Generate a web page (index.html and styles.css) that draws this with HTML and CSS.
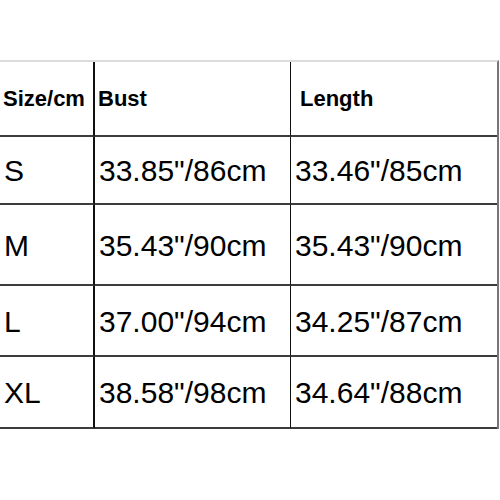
FILE: index.html
```html
<!DOCTYPE html>
<html>
<head>
<meta charset="utf-8">
<link rel="stylesheet" href="styles.css">
</head>
<body>
<div class="sheet">
  <div class="cell c1 head">Size/cm</div>
  <div class="cell c2 head">Bust</div>
  <div class="cell c3 head h3">Length</div>

  <div class="cell c1">S</div>
  <div class="cell c2">33.85"/86cm</div>
  <div class="cell c3">33.46"/85cm</div>

  <div class="cell c1">M</div>
  <div class="cell c2">35.43"/90cm</div>
  <div class="cell c3">35.43"/90cm</div>

  <div class="cell c1">L</div>
  <div class="cell c2">37.00"/94cm</div>
  <div class="cell c3">34.25"/87cm</div>

  <div class="cell c1">XL</div>
  <div class="cell c2">38.58"/98cm</div>
  <div class="cell c3">34.64"/88cm</div>
</div>
</body>
</html>
```

FILE: styles.css
```css
html, body {
  margin: 0;
  padding: 0;
  background: #fff;
}

body {
  font-family: "Liberation Sans", Arial, sans-serif;
  color: #000;
}

.sheet {
  margin-top: 60px;
  width: 499px;
  box-sizing: border-box;
  border-top: 2px solid #dcdcdc;
  border-right: 2px solid #777;
  display: grid;
  grid-template-columns: 95px 196px 206px;
  grid-template-rows: 75px 68px 81px 71px 72px;
}

.cell {
  box-sizing: border-box;
  display: flex;
  align-items: center;
  border-bottom: 2px solid #3c3c3c;
  font-size: 30px;
  line-height: 1;
  white-space: nowrap;
  padding-top: 2px;
}

.c1 {
  border-right: 2px solid #111;
  padding-left: 4px;
}

.c2 {
  border-right: 1px solid #111;
  padding-left: 4px;
}

.c3 {
  padding-left: 4px;
}

.head {
  font-size: 22px;
  font-weight: bold;
  padding-left: 3px;
  padding-top: 1px;
}

.head.h3 {
  padding-left: 9px;
}
```
